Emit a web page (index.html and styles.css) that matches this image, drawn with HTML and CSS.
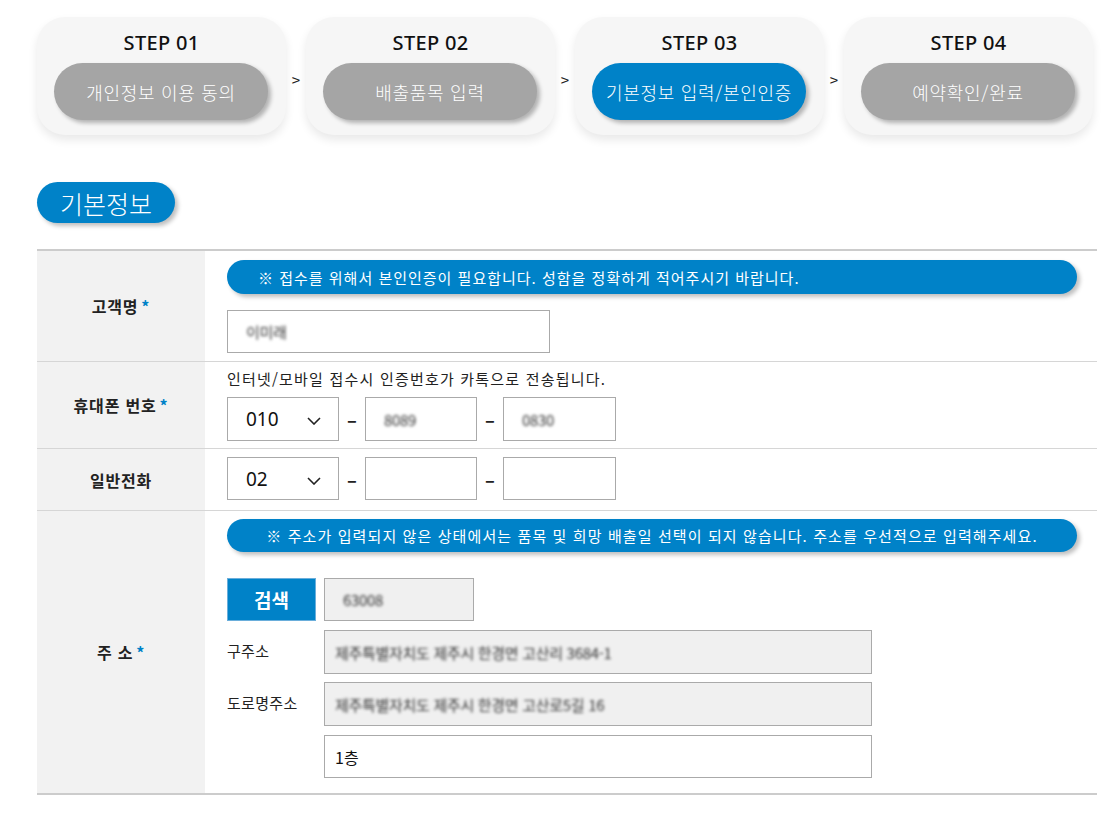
FILE: index.html
```html
<!DOCTYPE html>
<html lang="ko">
<head>
<meta charset="utf-8">
<title>기본정보 입력</title>
<link rel="stylesheet" href="styles.css">
</head>
<body>
<div class="page">
  <div class="steps">
    <div class="step">
      <div class="step-num">STEP 01</div>
      <div class="step-pill">개인정보 이용 동의</div>
    </div>
    <div class="step-arrow">&gt;</div>
    <div class="step">
      <div class="step-num">STEP 02</div>
      <div class="step-pill">배출품목 입력</div>
    </div>
    <div class="step-arrow">&gt;</div>
    <div class="step">
      <div class="step-num">STEP 03</div>
      <div class="step-pill active">기본정보 입력/본인인증</div>
    </div>
    <div class="step-arrow">&gt;</div>
    <div class="step">
      <div class="step-num">STEP 04</div>
      <div class="step-pill">예약확인/완료</div>
    </div>
  </div>

  <div class="section-title">기본정보</div>

  <div class="form">
    <div class="row row-name">
      <div class="label">고객명 <span class="req">*</span></div>
      <div class="cell">
        <div class="notice notice-left">※ 접수를 위해서 본인인증이 필요합니다. 성함을 정확하게 적어주시기 바랍니다.</div>
        <div class="input name-input"><span class="blur">이미래</span></div>
      </div>
    </div>
    <div class="row row-phone">
      <div class="label">휴대폰 번호 <span class="req">*</span></div>
      <div class="cell">
        <div class="help">인터넷/모바일 접수시 인증번호가 카톡으로 전송됩니다.</div>
        <div class="phone">
          <div class="select">010<svg class="chev" viewBox="0 0 14 8" width="14" height="8"><path d="M1 1l6 6 6-6" fill="none" stroke="#222" stroke-width="1.6"/></svg></div>
          <span class="dash">–</span>
          <div class="input small"><span class="blur">8089</span></div>
          <span class="dash">–</span>
          <div class="input small"><span class="blur">0830</span></div>
        </div>
      </div>
    </div>
    <div class="row row-tel">
      <div class="label">일반전화</div>
      <div class="cell">
        <div class="phone">
          <div class="select">02<svg class="chev" viewBox="0 0 14 8" width="14" height="8"><path d="M1 1l6 6 6-6" fill="none" stroke="#222" stroke-width="1.6"/></svg></div>
          <span class="dash">–</span>
          <div class="input small"></div>
          <span class="dash">–</span>
          <div class="input small"></div>
        </div>
      </div>
    </div>
    <div class="row row-addr">
      <div class="label">주 소 <span class="req">*</span></div>
      <div class="cell">
        <div class="notice notice-center">※ 주소가 입력되지 않은 상태에서는 품목 및 희망 배출일 선택이 되지 않습니다. 주소를 우선적으로 입력해주세요.</div>
        <div class="zip-row">
          <div class="btn-search">검색</div>
          <div class="input zip readonly"><span class="blur">63008</span></div>
        </div>
        <div class="addr-row">
          <div class="addr-label">구주소</div>
          <div class="input addr readonly"><span class="blur">제주특별자치도 제주시 한경면 고산리 3684-1</span></div>
        </div>
        <div class="addr-row">
          <div class="addr-label">도로명주소</div>
          <div class="input addr readonly"><span class="blur">제주특별자치도 제주시 한경면 고산로5길 16</span></div>
        </div>
        <div class="addr-row">
          <div class="addr-label"></div>
          <div class="input addr detail">1층</div>
        </div>
      </div>
    </div>
  </div>
</div>
</body>
</html>
```

FILE: styles.css
```css
* { box-sizing: border-box; }
body {
  margin: 0;
  background: #fff;
  font-family: "Noto Sans CJK KR", "Noto Sans", sans-serif;
  color: #222;
}
.page {
  padding: 17px 0 40px 37px;
  width: 1117px;
}
.steps {
  display: flex;
  align-items: flex-start;
}
.step {
  width: 249px;
  height: 118px;
  background: #f6f6f6;
  border-radius: 28px;
  box-shadow: 0 5px 10px rgba(0,0,0,0.09);
  padding: 12px 17px 0;
}
.step-num {
  text-align: center;
  font-family: "Noto Sans", sans-serif;
  font-size: 20px;
  font-weight: 500;
  line-height: 28px;
  color: #111;
  letter-spacing: 0.3px;
}
.step-pill {
  margin-top: 6px;
  width: 214px;
  height: 57px;
  border-radius: 29px;
  background: #a5a5a5;
  color: #fff;
  font-size: 18px;
  font-weight: 300;
  display: flex;
  align-items: center;
  justify-content: center;
  box-shadow: 3px 3px 4px rgba(0,0,0,0.28);
  letter-spacing: 0.7px;
}
.step-pill.active { background: #0082c8; }
.step-arrow {
  width: 20px;
  text-align: center;
  padding-top: 52px;
  font-size: 15px;
  font-weight: 400;
  color: #222;
}
.section-title {
  margin-top: 47px;
  width: 138px;
  height: 41px;
  border-radius: 21px;
  background: #0082c8;
  color: #fff;
  font-size: 25px;
  font-weight: 300;
  display: flex;
  align-items: center;
  justify-content: center;
  box-shadow: 3px 3px 4px rgba(0,0,0,0.25);
}
.form {
  margin-top: 26px;
  width: 1060px;
  border-top: 2px solid #cccccc;
  border-bottom: 2px solid #cccccc;
}
.row {
  display: flex;
  border-bottom: 1px solid #d6d6d6;
}
.row:last-child { border-bottom: none; }
.label {
  width: 168px;
  flex: none;
  background: #f2f2f2;
  display: flex;
  align-items: center;
  justify-content: center;
  font-size: 16px;
  font-weight: 700;
  color: #222;
  letter-spacing: 0.8px;
}
.req { color: #0082c8; margin-left: 3px; }
.cell {
  flex: 1;
  padding-left: 22px;
  display: flex;
  flex-direction: column;
}
.row-name .cell { padding-top: 9px; padding-bottom: 8px; }
.row-phone .cell { padding-top: 6px; padding-bottom: 7px; }
.row-tel .cell { padding-top: 8px; padding-bottom: 10px; }
.row-addr .cell { padding-top: 8px; padding-bottom: 15px; }
.notice {
  width: 850px;
  height: 34px;
  border-radius: 17px;
  background: #0082c8;
  color: #fff;
  font-size: 15px;
  font-weight: 400;
  display: flex;
  align-items: center;
  box-shadow: 3px 3px 4px rgba(0,0,0,0.25);
  letter-spacing: 1px;
}
.notice-left { padding-left: 31px; }
.notice-center { justify-content: center; height: 33px; letter-spacing: 1.1px; }
.input {
  height: 44px;
  border: 1px solid #aaaaaa;
  background: #fff;
  display: flex;
  align-items: center;
  padding-left: 18px;
  font-size: 16px;
  color: #111;
}
.name-input { width: 323px; margin-top: 16px; height: 43px; }
.blur {
  filter: blur(1.4px);
  color: #333;
  font-size: 15px;
  letter-spacing: -0.3px;
}
.help {
  font-size: 15px;
  line-height: 22px;
  color: #222;
  margin-bottom: 7px;
  letter-spacing: 1.2px;
}
.phone {
  display: flex;
  align-items: center;
}
.select {
  width: 112px;
  height: 44px;
  border: 1px solid #aaaaaa;
  display: flex;
  align-items: center;
  padding-left: 18px;
  font-family: "Noto Sans", sans-serif;
  font-size: 19px;
  color: #111;
  position: relative;
}
.row-tel .select, .row-tel .input { height: 43px; }
.chev { position: absolute; left: 79px; top: 19px; }
.dash {
  width: 26px;
  text-align: center;
  font-size: 18px;
  font-weight: 700;
  color: #222;
}
.input.small { width: 112px; }
.phone .input.small:last-child { width: 113px; }
.zip-row {
  display: flex;
  margin-top: 26px;
}
.btn-search {
  width: 89px;
  height: 43px;
  background: #0082c8;
  color: #fff;
  font-size: 19px;
  font-weight: 700;
  display: flex;
  align-items: center;
  justify-content: center;
  border: 1px solid #6aaedb;
}
.readonly { background: #f0f0f0; }
.zip { width: 150px; margin-left: 8px; height: 43px; }
.addr-row {
  display: flex;
  align-items: center;
  margin-top: 9px;
}
.addr-row + .addr-row { margin-top: 8px; }
.addr-row:last-child { margin-top: 9px; }
.addr-label {
  width: 97px;
  font-size: 15px;
  color: #222;
  padding-bottom: 4px;
  letter-spacing: 0.3px;
}
.input.addr { width: 548px; padding-left: 10px; }
.input.detail { height: 43px; font-size: 16px; }
```
